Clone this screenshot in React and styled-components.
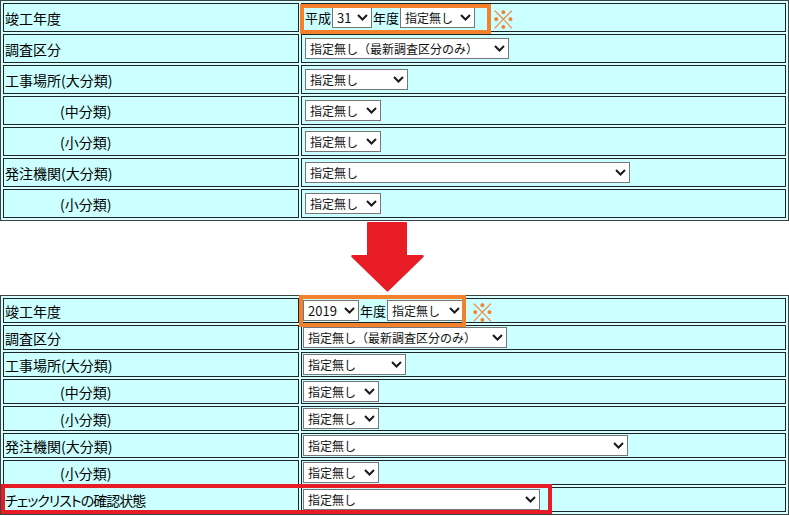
import React from "react"
import styled, { createGlobalStyle } from "styled-components"

const GlobalStyle = createGlobalStyle`
  * { box-sizing: border-box; }
  body {
    margin: 0;
    background: #fff;
    font-family: "Noto Sans CJK JP", "Liberation Sans", sans-serif;
    color: #000;
  }
`

const ORANGE = "#f3802c"
const RED = "#e81c24"

const Page = styled.div`
  width: 789px;
  display: flex;
  flex-direction: column;
`

const Table = styled.table`
  width: 789px;
  table-layout: fixed;
  border: 1px solid #3a4444;
  border-spacing: 2px;
  background: #d8ffff;
`

const Cell = styled.td`
  position: relative;
  border: 1px solid #1c2626;
  background: #ccffff;
  padding: ${p => (p.$compact ? "1px" : "3px")};
  height: ${p => (p.$compact ? "25px" : "29px")};
  vertical-align: middle;
  font-size: 13px;
  line-height: 16px;
`

const LabelCell = styled(Cell)`
  width: 296px;
  padding-left: ${p => (p.$indent ? "56px" : "1px")};
  font-size: 14px;
  white-space: nowrap;
  font-feature-settings: ${p => (p.$palt ? '"palt"' : "normal")};
  letter-spacing: ${p => (p.$palt ? "-1px" : "normal")};
`

const Field = styled.div`
  display: flex;
  align-items: center;
  gap: 1px;
  height: 21px;
`

const RefMark = styled.span`
  color: ${ORANGE};
  font-size: 25px;
  line-height: 22px;
  margin-left: ${p => p.$gap}px;
`

const Mark = styled.span`
  position: absolute;
  left: ${p => p.$x}px;
  top: ${p => p.$y}px;
  width: ${p => p.$w}px;
  height: ${p => p.$h}px;
  border: 4px solid ${p => p.$color};
  pointer-events: none;
  z-index: 2;
`

const SelectWrap = styled.span`
  position: relative;
  display: flex;
  width: ${p => p.$w}px;
  height: 21px;
  flex: none;
`

const NativeSelect = styled.select`
  appearance: none;
  width: 100%;
  height: 100%;
  margin: 0;
  border: 1px solid #767676;
  border-radius: 0;
  background: #fff;
  color: #111;
  font-family: "Noto Sans CJK JP", sans-serif;
  font-size: ${p => (p.$digits ? "13px" : "12px")};
  padding: 0 18px 0 4px;
  outline: none;
`

const Chevron = styled.svg`
  position: absolute;
  right: 4px;
  top: 7px;
  pointer-events: none;
`

const ArrowRow = styled.div`
  height: 74px;
  padding: 1px 0 0 350px;
`

const Select = ({ w, value }) => (
  <SelectWrap $w={w}>
    <NativeSelect defaultValue={value} $digits={/^\d+$/.test(value)}>
      <option>{value}</option>
    </NativeSelect>
    <Chevron width="11" height="7" viewBox="0 0 11 7">
      <path d="M1 1 L5.5 5.5 L10 1" fill="none" stroke="#1a1a1a" strokeWidth="2" />
    </Chevron>
  </SelectWrap>
)

const rows = [
  { label: "調査区分", value: "指定無し（最新調査区分のみ）", w: 204 },
  { label: "工事場所(大分類)", value: "指定無し", w: 103 },
  { label: "(中分類)", indent: true, value: "指定無し", w: 76 },
  { label: "(小分類)", indent: true, value: "指定無し", w: 76 },
  { label: "発注機関(大分類)", value: "指定無し", w: 325 },
  { label: "(小分類)", indent: true, value: "指定無し", w: 76 },
]

const FormTable = ({ compact, yearCell, mark, extra }) => (
  <Table>
    <tbody>
      <tr>
        <LabelCell $compact={compact}>竣工年度</LabelCell>
        <Cell $compact={compact}>
          <Field>{yearCell}</Field>
          <Mark {...mark} $color={ORANGE} />
        </Cell>
      </tr>
      {rows.map((r, i) => (
        <tr key={i}>
          <LabelCell $compact={compact} $indent={r.indent}>{r.label}</LabelCell>
          <Cell $compact={compact}>
            <Field>
              <Select w={r.w} value={r.value} />
            </Field>
          </Cell>
        </tr>
      ))}
      {extra}
    </tbody>
  </Table>
)

const App = () => (
  <Page>
    <GlobalStyle />
    <FormTable
      yearCell={
        <>
          <span>平成</span>
          <Select w={40} value="31" />
          <span>年度</span>
          <Select w={75} value="指定無し" />
          <RefMark $gap={15}>※</RefMark>
        </>
      }
      mark={{ $x: -2, $y: 0, $w: 191, $h: 30 }}
    />
    <ArrowRow>
      <svg width="75" height="70" viewBox="0 0 75 70">
        <path
          d="M17 1 Q17 0 18 0 H56 Q57 0 57 1 V33 H72 Q75 33 73 35.5 L38.5 69 Q37.5 70 36.5 69 L2 35.5 Q0 33 3 33 H17 Z"
          fill={RED}
        />
      </svg>
    </ArrowRow>
    <FormTable
      compact
      yearCell={
        <>
          <Select w={56} value="2019" />
          <span>年度</span>
          <Select w={77} value="指定無し" />
          <RefMark $gap={5}>※</RefMark>
        </>
      }
      mark={{ $x: -3, $y: -4, $w: 167, $h: 32 }}
      extra={
        <tr>
          <LabelCell $compact $palt>
            チェックリストの確認状態
            <Mark $x={-3} $y={-4} $w={551} $h={30} $color={RED} />
          </LabelCell>
          <Cell $compact>
            <Field>
              <Select w={237} value="指定無し" />
            </Field>
          </Cell>
        </tr>
      }
    />
  </Page>
)

export default App
